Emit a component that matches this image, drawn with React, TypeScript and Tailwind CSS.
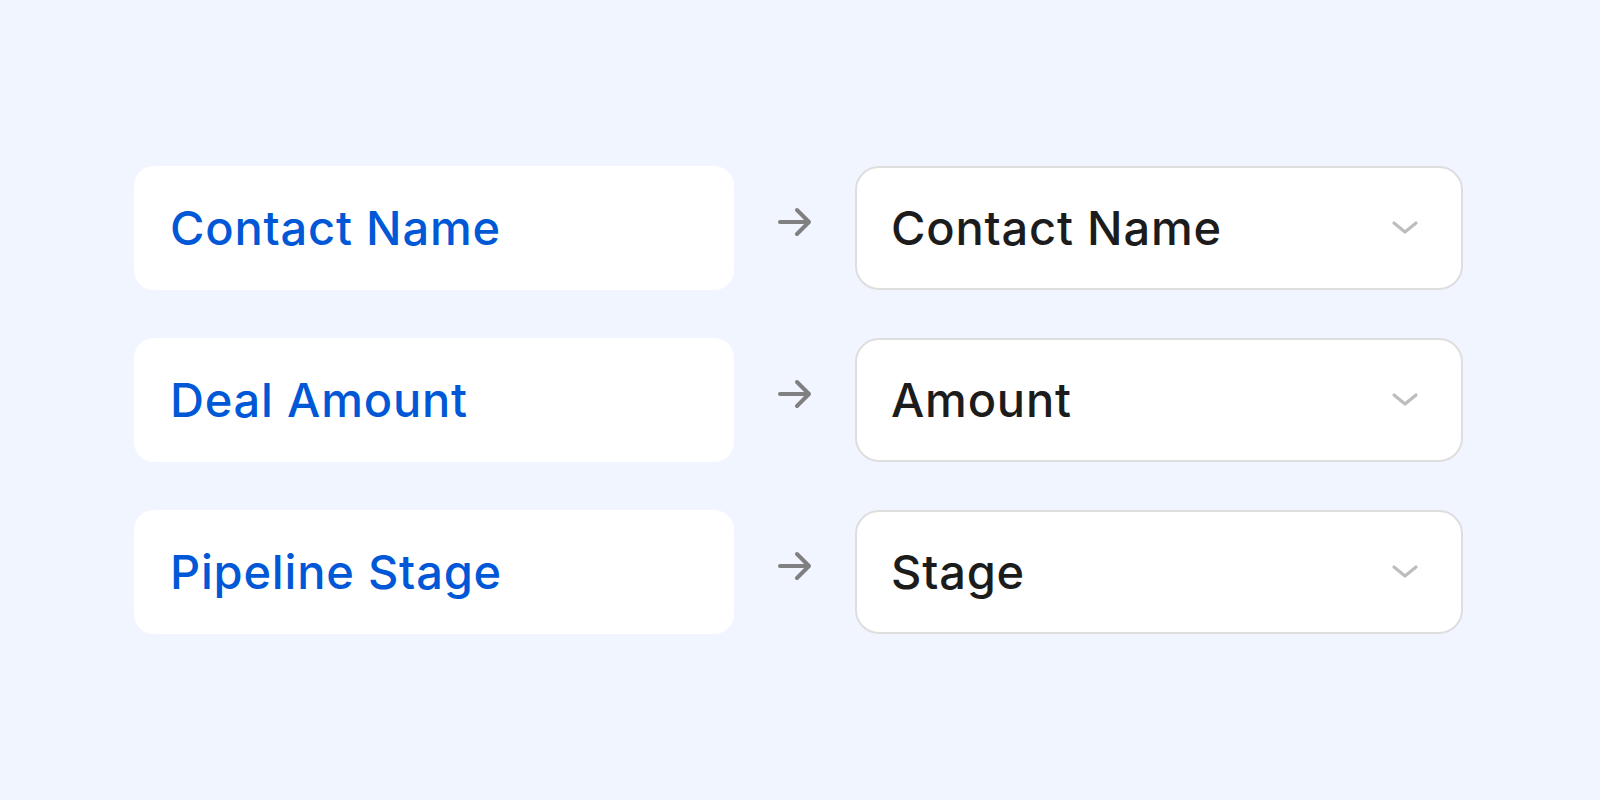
import React from "react";

const rows = [
  { source: "Contact Name", target: "Contact Name" },
  { source: "Deal Amount", target: "Amount" },
  { source: "Pipeline Stage", target: "Stage" },
];

function ArrowIcon() {
  return (
    <svg width="36" height="32" viewBox="0 0 36 32" fill="none" className="-mt-[12px]">
      <path d="M3 16H32M20 4L32 16L20 28" stroke="#808080" strokeWidth="4" strokeLinecap="round" strokeLinejoin="round" />
    </svg>
  );
}

function ChevronIcon() {
  return (
    <svg width="28" height="16" viewBox="0 0 28 16" fill="none">
      <path d="M3 3L14 12L25 3" stroke="#bdbdbd" strokeWidth="3.2" strokeLinecap="round" strokeLinejoin="round" />
    </svg>
  );
}

export default function App() {
  return (
    <div className="w-full h-[800px] bg-[#f0f5ff] flex flex-col items-center justify-center gap-[48px] pr-[3px] font-['Inter','Noto_Sans',sans-serif]">
      {rows.map((row) => (
        <div key={row.source} className="flex items-center">
          <div className="w-[600px] h-[124px] bg-white rounded-[20px] flex items-center pl-[36px]">
            <span className="text-[47px] font-medium text-[#0058d6] tracking-[0.8px]">{row.source}</span>
          </div>
          <div className="w-[121px] flex justify-center">
            <ArrowIcon />
          </div>
          <div className="w-[608px] h-[124px] bg-white rounded-[24px] border-2 border-[#dedede] flex items-center justify-between pl-[34px] pr-[42px]">
            <span className="text-[47px] font-medium text-[#1c1c1c] tracking-[0.8px]">{row.target}</span>
            <ChevronIcon />
          </div>
        </div>
      ))}
    </div>
  );
}
